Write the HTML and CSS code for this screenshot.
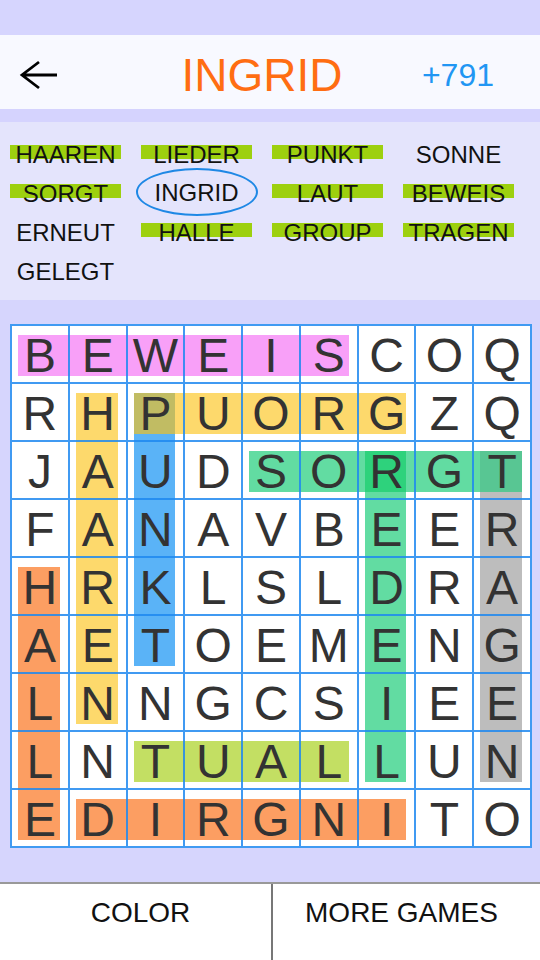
FILE: index.html
```html
<!DOCTYPE html>
<html>
<head>
<meta charset="utf-8">
<link rel="stylesheet" href="styles.css">
</head>
<body>
<div class="app">
  <div class="topband"></div>
  <header class="header">
    <svg class="back" width="40" height="30" viewBox="0 0 40 30">
      <path d="M38 15 H3 M20 2 L3 15 L20 28" fill="none" stroke="#000" stroke-width="2.8" stroke-linejoin="miter"/>
    </svg>
    <div class="title">INGRID</div>
    <div class="score">+791</div>
  </header>
  <div class="sep"></div>
  <section class="words">
    <div class="word found">HAAREN</div>
    <div class="word found">LIEDER</div>
    <div class="word found">PUNKT</div>
    <div class="word">SONNE</div>
    <div class="word found">SORGT</div>
    <div class="word"><span class="ring">INGRID</span></div>
    <div class="word found">LAUT</div>
    <div class="word found">BEWEIS</div>
    <div class="word">ERNEUT</div>
    <div class="word found">HALLE</div>
    <div class="word found">GROUP</div>
    <div class="word found">TRAGEN</div>
    <div class="word">GELEGT</div>
  </section>
  <main class="area">
    <div class="board">
      <div class="bands">
        <div class="band pink" style="grid-area:1/1/2/7"></div>
        <div class="band yellow" style="grid-area:2/3/3/8"></div>
        <div class="band yellow" style="grid-area:2/2/8/3"></div>
        <div class="band blue" style="grid-area:2/3/7/4"></div>
        <div class="band olive" style="grid-area:2/3/3/4"></div>
        <div class="band green" style="grid-area:3/5/4/10"></div>
        <div class="band green" style="grid-area:3/7/9/8"></div>
        <div class="band gray" style="grid-area:3/9/9/10"></div>
        <div class="band deepgreen" style="grid-area:3/7/4/8"></div>
        <div class="band graygreen" style="grid-area:3/9/4/10"></div>
        <div class="band orange" style="grid-area:5/1/10/2"></div>
        <div class="band orange" style="grid-area:9/2/10/8"></div>
        <div class="band lime" style="grid-area:8/3/9/7"></div>
      </div>
      <div class="cells">
        <div class="c">B</div><div class="c">E</div><div class="c">W</div><div class="c">E</div><div class="c">I</div><div class="c">S</div><div class="c">C</div><div class="c">O</div><div class="c">Q</div>
        <div class="c">R</div><div class="c">H</div><div class="c">P</div><div class="c">U</div><div class="c">O</div><div class="c">R</div><div class="c">G</div><div class="c">Z</div><div class="c">Q</div>
        <div class="c">J</div><div class="c">A</div><div class="c">U</div><div class="c">D</div><div class="c">S</div><div class="c">O</div><div class="c">R</div><div class="c">G</div><div class="c">T</div>
        <div class="c">F</div><div class="c">A</div><div class="c">N</div><div class="c">A</div><div class="c">V</div><div class="c">B</div><div class="c">E</div><div class="c">E</div><div class="c">R</div>
        <div class="c">H</div><div class="c">R</div><div class="c">K</div><div class="c">L</div><div class="c">S</div><div class="c">L</div><div class="c">D</div><div class="c">R</div><div class="c">A</div>
        <div class="c">A</div><div class="c">E</div><div class="c">T</div><div class="c">O</div><div class="c">E</div><div class="c">M</div><div class="c">E</div><div class="c">N</div><div class="c">G</div>
        <div class="c">L</div><div class="c">N</div><div class="c">N</div><div class="c">G</div><div class="c">C</div><div class="c">S</div><div class="c">I</div><div class="c">E</div><div class="c">E</div>
        <div class="c">L</div><div class="c">N</div><div class="c">T</div><div class="c">U</div><div class="c">A</div><div class="c">L</div><div class="c">L</div><div class="c">U</div><div class="c">N</div>
        <div class="c">E</div><div class="c">D</div><div class="c">I</div><div class="c">R</div><div class="c">G</div><div class="c">N</div><div class="c">I</div><div class="c">T</div><div class="c">O</div>
      </div>
    </div>
  </main>
  <footer class="footer">
    <div class="btn btn-left">COLOR</div>
    <div class="btn btn-right">MORE GAMES</div>
  </footer>
</div>
</body>
</html>
```

FILE: styles.css
```css
* { box-sizing: border-box; }
html, body { margin: 0; padding: 0; }
body {
  width: 540px;
  height: 960px;
  overflow: hidden;
  font-family: "Liberation Sans", Arial, sans-serif;
  background: #d6d5fd;
}
.app { display: flex; flex-direction: column; height: 960px; }
.topband { height: 35px; background: #d6d5fe; }
.header {
  height: 74px;
  background: #f8f9ff;
  display: flex;
  align-items: center;
  padding-top: 6px;
}
.back { margin-left: 19px; flex: none; }
.title {
  flex: 1;
  text-align: center;
  padding-left: 43px;
  font-size: 46px;
  color: #ff6d12;
  line-height: 1;
}
.score {
  margin-right: 46px;
  font-size: 32px;
  color: #2196f3;
  line-height: 1;
}
.sep { height: 13px; background: #d5d3fe; }
.words {
  height: 178px;
  background: #e4e4fc;
  display: grid;
  grid-template-columns: repeat(4, 131px);
  grid-auto-rows: 39px;
  padding-top: 13px;
  align-content: start;
}
.word {
  font-size: 24px;
  line-height: 39px;
  text-align: center;
  color: #111;
  display: flex;
  justify-content: center;
  align-items: center;
}
.word.found {
  background: linear-gradient(#9dd00f, #9dd00f) no-repeat;
  background-size: 111px 14px;
  background-position: 10px 10px;
}
.ring {
  display: inline-flex;
  align-items: center;
  justify-content: center;
  width: 122px;
  height: 48px;
  border: 2.5px solid #1e88e5;
  border-radius: 50%;
  margin-top: -3px;
}
.area {
  flex: 1;
  background: #d6d5fd;
  padding: 24px 0 0 10px;
}
.board {
  position: relative;
  width: 522px;
  height: 524px;
  background: #fff;
  border: 1px solid rgba(30, 136, 240, 0.85);
}
.bands, .cells {
  display: grid;
  grid-template-columns: repeat(9, 1fr);
  grid-template-rows: repeat(9, 58px);
}
.bands { position: absolute; inset: 0; }
.cells { position: relative; }
.band { margin: 10px 9px 7px 7px; }
.pink { background: #f8a0f8; }
.yellow { background: #fdd96c; }
.blue { background: #5ab3f7; }
.olive { background: #c1bc63; }
.green { background: #62dca2; }
.deepgreen { background: #2ed27c; }
.gray { background: #bdbdbd; }
.graygreen { background: #58c693; }
.orange { background: #fc9e62; }
.lime { background: #c3df63; }
.c {
  border: 1px solid rgba(30, 136, 240, 0.85);
  display: flex;
  align-items: center;
  justify-content: center;
  padding-top: 3px;
  font-size: 48px;
  color: #333;
  line-height: 1;
}
.footer {
  height: 78px;
  background: #fff;
  border-top: 2px solid #999;
  display: flex;
}
.btn {
  font-size: 28px;
  line-height: 28px;
  color: #111;
  padding-top: 15px;
  text-align: center;
}
.btn-left { width: 271px; padding-left: 10px; }
.btn-right { flex: 1; border-left: 2px solid #777; padding-right: 10px; }
```
